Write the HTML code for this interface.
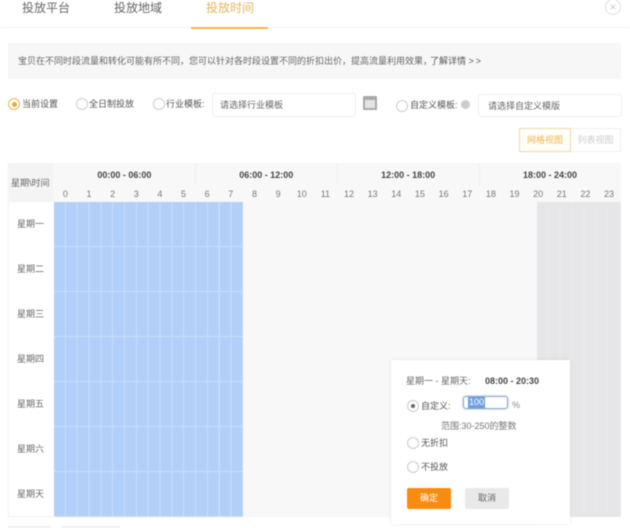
<!DOCTYPE html>
<html><head><meta charset="utf-8"><style>
html,body{margin:0;padding:0;background:#fff}
body{width:630px;height:528px;overflow:hidden;position:relative;font-family:"Liberation Sans","Noto Sans CJK SC",sans-serif;color:#555}
#p{position:absolute;left:0;top:0;width:630px;height:528px;filter:blur(.6px);overflow:hidden}
.a{position:absolute;white-space:nowrap}
.f9{font-size:9px;line-height:12px}
.tab{font-size:12px;line-height:16px;top:0;color:#666}
.r{position:absolute;width:12px;height:12px;border:1px solid #ccc;border-radius:50%;background:#fff;box-sizing:border-box}
.inp{position:absolute;border:1px solid #eee;border-radius:3px;box-sizing:border-box;background:#fff;font-size:9px;line-height:22px;color:#666;padding-left:7px}
.flex{position:absolute;display:flex;text-align:center}
.flex span{flex:1}
.day{position:absolute;left:8px;width:45px;text-align:center;font-size:9px;line-height:12px;color:#666}
</style></head><body><div id="p">
<div class="a tab" style="left:22px">投放平台</div>
<div class="a tab" style="left:114px">投放地域</div>
<div class="a tab" style="left:206px;color:#e8b35c">投放时间</div>
<div class="a" style="left:0;top:27px;width:630px;height:1px;background:#f3f3f3"></div>
<div class="a" style="left:191px;top:26.500px;width:77px;height:2px;background:#eeb650"></div>
<div class="a" style="left:605px;top:-1px;width:16px;height:16px;border:1px solid #ddd;border-radius:50%;box-sizing:border-box;color:#ccc;font-size:12px;line-height:14px;text-align:center">×</div>

<div class="a" style="left:8px;top:43px;width:613px;height:36px;background:#f7f7f7"></div>
<div class="a f9" style="left:18px;top:55px;color:#666">宝贝在不同时段流量和转化可能有所不同，您可以针对各时段设置不同的折扣出价，提高流量利用效果，</div>
<div class="a f9" style="left:430px;top:55px;color:#555">了解详情 <span style="letter-spacing:2px">&gt;&gt;</span></div>

<div class="r" style="left:8px;top:98px;border-color:#eeb650"></div>
<div class="a" style="left:11.500px;top:101.500px;width:5px;height:5px;border-radius:50%;background:#e8a83c"></div>
<div class="a f9" style="left:22px;top:98px">当前设置</div>
<div class="r" style="left:76px;top:98px"></div>
<div class="a f9" style="left:89px;top:98px">全日制投放</div>
<div class="r" style="left:153px;top:98px"></div>
<div class="a f9" style="left:166px;top:98px">行业模板:</div>
<div class="inp" style="left:212px;top:93px;width:144px;height:24px">请选择行业模板</div>
<div class="a" style="left:363px;top:96px;width:14px;height:14px;background:#a9a9a9;border-radius:1px"></div>
<div class="a" style="left:365px;top:100px;width:10px;height:8px;background:#e4e4e4"></div>
<div class="r" style="left:396px;top:100px"></div>
<div class="a f9" style="left:410px;top:99px">自定义模板:</div>
<div class="a" style="left:461px;top:100px;width:9px;height:9px;background:#ccc;border-radius:50%"></div>
<div class="inp" style="left:478px;top:94px;width:144px;height:23px;padding-left:9px">请选择自定义模版</div>

<div class="a f9" style="left:519px;top:128px;width:52px;height:24px;box-sizing:border-box;border:1px solid #eed9a8;line-height:22px;text-align:center;color:#eeb650;background:#fffdf8">网格视图</div>
<div class="a f9" style="left:571px;top:128px;width:50px;height:24px;box-sizing:border-box;border:1px solid #f2f2f2;border-left:0;line-height:22px;text-align:center;color:#ccc">列表视图</div>

<div class="a" style="left:8px;top:163px;width:613px;height:39px;background:#f8f8f8"></div>
<div class="a" style="left:8px;top:163px;width:45px;height:39px;background:#f4f4f4"></div>
<div class="a f9" style="left:11px;top:177px;color:#666">星期\时间</div>
<div class="flex" style="left:53.5px;top:168px;width:567.500px;font-size:9px;line-height:14px;font-weight:bold;color:#444">
<span>00:00 - 06:00</span><span>06:00 - 12:00</span><span>12:00 - 18:00</span><span>18:00 - 24:00</span></div>
<div class="a" style="left:195px;top:163px;width:1px;height:22px;background:#efefef"></div>
<div class="a" style="left:337px;top:163px;width:1px;height:22px;background:#efefef"></div>
<div class="a" style="left:479px;top:163px;width:1px;height:22px;background:#efefef"></div>
<div class="flex" style="left:53.5px;top:188px;width:567.500px;font-size:9px;line-height:12px;color:#777">
<span>0</span><span>1</span><span>2</span><span>3</span><span>4</span><span>5</span><span>6</span><span>7</span><span>8</span><span>9</span><span>10</span><span>11</span><span>12</span><span>13</span><span>14</span><span>15</span><span>16</span><span>17</span><span>18</span><span>19</span><span>20</span><span>21</span><span>22</span><span>23</span></div>

<div class="a" style="left:8px;top:202px;width:45.500px;height:315px;background:#fff;border-left:1px solid #f2f2f2;border-bottom:1px solid #f2f2f2;box-sizing:border-box"></div>
<div class="day" style="top:218px">星期一</div>
<div class="day" style="top:263px">星期二</div>
<div class="day" style="top:308px">星期三</div>
<div class="day" style="top:353px">星期四</div>
<div class="day" style="top:398px">星期五</div>
<div class="day" style="top:443px">星期六</div>
<div class="day" style="top:488px">星期天</div>

<div class="a" style="left:53.5px;top:202px;width:189.500px;height:315px;background-color:#b2cff9;background-image:repeating-linear-gradient(90deg,transparent 0,transparent 10.800px,#c6dcfa 10.800px,#c6dcfa 11.840px),repeating-linear-gradient(180deg,transparent 0,transparent 44px,#c8ddfa 44px,#c8ddfa 45px)"></div>
<div class="a" style="left:243px;top:202px;width:294px;height:315px;background:#f8f8f9"></div>
<div class="a" style="left:537px;top:202px;width:84px;height:315px;background-color:#e6e6e8;background-image:repeating-linear-gradient(90deg,transparent 0,transparent 10.800px,#eaeaec 10.800px,#eaeaec 11.840px)"></div>
<div class="a" style="left:621px;top:500px;width:9px;height:28px;background:#fff"></div>
<div class="a" style="left:537px;top:517px;width:93px;height:11px;background:#fff"></div>
<div class="a" style="left:8px;top:526px;width:43px;height:4px;background:#eee"></div>
<div class="a" style="left:62px;top:526px;width:58px;height:4px;background:#eee"></div>

<div class="a" style="left:391px;top:360px;width:179px;height:164px;background:#fff;box-shadow:0 0 3px rgba(0,0,0,.10)"></div>
<div class="a f9" style="left:406px;top:375px;color:#666">星期一 - 星期天:</div>
<div class="a" style="left:485px;top:375px;font-size:9px;line-height:12px;font-weight:bold;color:#444">08:00 - 20:30</div>
<div class="r" style="left:407px;top:400px"></div>
<div class="a" style="left:411px;top:404px;width:4px;height:4px;border-radius:50%;background:#666"></div>
<div class="a f9" style="left:421px;top:400px">自定义:</div>
<div class="a" style="left:463px;top:396px;width:45px;height:13px;box-sizing:border-box;border:1px solid #8aa3c4;border-radius:3px;background:#fff;box-shadow:0 0 2px #9dc0ea"></div>
<div class="a" style="left:468px;top:397px;width:17px;height:11px;background:#6d9fe0;color:#fff;font-size:9px;line-height:11px;text-align:center">100</div>
<div class="a f9" style="left:512px;top:399px;color:#888">%</div>
<div class="a f9" style="left:441px;top:420px;color:#777">范围:30-250的整数</div>
<div class="r" style="left:407px;top:437px"></div>
<div class="a f9" style="left:421px;top:437px">无折扣</div>
<div class="r" style="left:407px;top:461px"></div>
<div class="a f9" style="left:421px;top:461px">不投放</div>
<div class="a f9" style="left:407px;top:488px;width:44px;height:21px;line-height:21px;text-align:center;background:#f98c10;color:#fff;border-radius:2px">确定</div>
<div class="a f9" style="left:465px;top:488px;width:44px;height:21px;line-height:21px;text-align:center;background:#e9e9e9;color:#666;border-radius:2px">取消</div>
</div></body></html>
